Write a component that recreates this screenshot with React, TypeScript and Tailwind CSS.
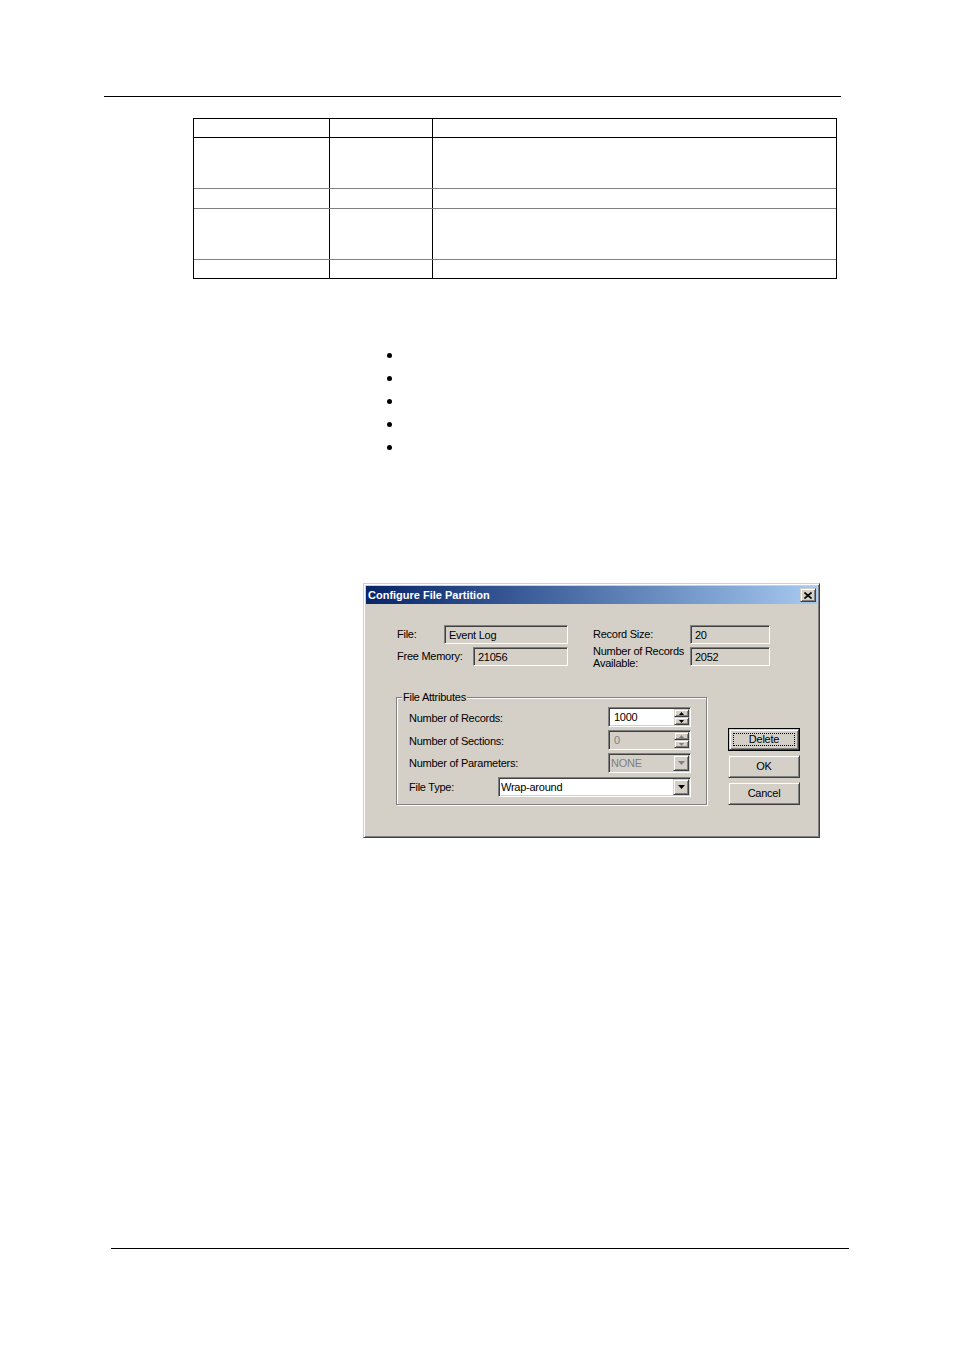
const sunken =
  "border border-t-[#808080] border-l-[#808080] border-r-white border-b-white shadow-[inset_1px_1px_0_#404040,inset_-1px_-1px_0_#d4d0c8]";
const raised =
  "border border-t-[#d4d0c8] border-l-[#d4d0c8] border-r-[#404040] border-b-[#404040] shadow-[inset_1px_1px_0_#fff,inset_-1px_-1px_0_#808080] bg-[#d4d0c8]";

const tableRows = [
  { h: "h-[19px]", line: "border-b border-b-black" },
  { h: "h-[51px]", line: "border-b border-b-[#808080]" },
  { h: "h-[20px]", line: "border-b border-b-[#808080]" },
  { h: "h-[51px]", line: "border-b border-b-[#808080]" },
  { h: "h-[18px]", line: "" },
];

function Arrow({ dir, color, w, h }: { dir: "up" | "down"; color: string; w: number; h: number }) {
  const pts = dir === "up" ? `0,${h} ${w},${h} ${w / 2},0` : `0,0 ${w},0 ${w / 2},${h}`;
  return (
    <svg width={w} height={h} viewBox={`0 0 ${w} ${h}`} className="block">
      <polygon points={pts} fill={color} />
    </svg>
  );
}

function ReadField({ className, value }: { className: string; value: string }) {
  return (
    <div className={`${className} h-[19px] ${sunken} bg-[#d4d0c8] flex items-center pl-[4px] pt-[1px]`}>
      {value}
    </div>
  );
}

function Spin({ value, disabled }: { value: string; disabled?: boolean }) {
  return (
    <div
      className={`w-[83px] h-[20px] ${sunken} flex p-[1px] ${disabled ? "bg-[#d4d0c8] text-[#808080]" : "bg-white"}`}
    >
      <div className="flex-1 flex items-center pl-[4px] pt-[1px]">{value}</div>
      <div className="w-[15px] flex flex-col">
        <div className={`h-[8px] ${raised} flex items-center justify-center`}>
          <Arrow dir="up" w={5} h={3} color={disabled ? "#808080" : "#000"} />
        </div>
        <div className={`h-[8px] ${raised} flex items-center justify-center`}>
          <Arrow dir="down" w={5} h={3} color={disabled ? "#808080" : "#000"} />
        </div>
      </div>
    </div>
  );
}

function Combo({ value, width, disabled }: { value: string; width: string; disabled?: boolean }) {
  return (
    <div
      className={`${width} h-[20px] ${sunken} flex p-[1px] ${disabled ? "bg-[#d4d0c8] text-[#808080]" : "bg-white"}`}
    >
      <div className="flex-1 flex items-center pl-[1px] pt-[1px]">{value}</div>
      <div className={`w-[16px] ${raised} flex items-center justify-center`}>
        <Arrow dir="down" w={7} h={4} color={disabled ? "#808080" : "#000"} />
      </div>
    </div>
  );
}

function Button({ label, isDefault }: { label: string; isDefault?: boolean }) {
  if (isDefault) {
    return (
      <div className="w-[72px] h-[23px] border border-black">
        <div className={`h-full ${raised} flex items-center justify-center p-[3px]`}>
          <div className="w-full h-full border border-dotted border-black flex items-center justify-center">
            {label}
          </div>
        </div>
      </div>
    );
  }
  return (
    <div className={`w-[72px] h-[23px] ${raised} flex items-center justify-center`}>{label}</div>
  );
}

function Dialog() {
  return (
    <div
      className={`ml-[363px] w-[457px] h-[255px] bg-[#d4d0c8] p-[2px] border border-t-[#d4d0c8] border-l-[#d4d0c8] border-r-[#404040] border-b-[#404040] shadow-[inset_1px_1px_0_#fff,inset_-1px_-1px_0_#808080] text-[11px] tracking-[-0.25px] text-black font-[family-name:Liberation_Sans,Arial,sans-serif]`}
    >
      <div className="h-[18px] flex items-center justify-between pl-[2px] pr-[1px] bg-linear-to-r from-[#0a246a] to-[#a6caf0]">
        <span className="text-white font-bold tracking-normal">Configure File Partition</span>
        <div className={`w-[16px] h-[14px] ${raised} flex items-center justify-center`}>
          <svg width="8" height="7" viewBox="0 0 8 7" className="block">
            <path d="M0.5 0.5 L7.5 6.5 M7.5 0.5 L0.5 6.5" stroke="#000" strokeWidth="1.6" />
          </svg>
        </div>
      </div>

      <div className="pt-[21px] pl-[30px]">
        <div className="ml-[1px] flex items-center h-[19px]">
          <div className="w-[47px]">File:</div>
          <ReadField className="w-[124px]" value="Event Log" />
          <div className="ml-[25px] w-[97px]">Record Size:</div>
          <ReadField className="w-[80px]" value="20" />
        </div>
        <div className="ml-[1px] mt-[3px] flex items-center h-[19px]">
          <div className="w-[76px]">Free Memory:</div>
          <ReadField className="w-[95px]" value="21056" />
          <div className="ml-[25px] w-[97px] leading-[12px]">
            Number of Records
            <br />
            Available:
          </div>
          <ReadField className="w-[80px]" value="2052" />
        </div>

        <div className="mt-[31px] flex items-start">
          <div className="w-[311px] h-[108px] border border-[#808080] shadow-[inset_1px_1px_0_#fff,1px_1px_0_#fff] pl-[12px] pr-[15px]">
            <div className="-mt-[7px] -ml-[7px] w-fit px-[1px] bg-[#d4d0c8] leading-[12px]">File Attributes</div>
            <div className="mt-[4px] flex items-center justify-between h-[20px]">
              <span className="pt-[3px]">Number of Records:</span>
              <Spin value="1000" />
            </div>
            <div className="mt-[3px] flex items-center justify-between h-[20px]">
              <span className="pt-[2px]">Number of Sections:</span>
              <Spin value="0" disabled />
            </div>
            <div className="mt-[3px] flex items-center justify-between h-[20px]">
              <span className="pt-[1px]">Number of Parameters:</span>
              <Combo value="NONE" width="w-[83px]" disabled />
            </div>
            <div className="mt-[4px] flex items-center justify-between h-[20px]">
              <span>File Type:</span>
              <Combo value="Wrap-around" width="w-[193px]" />
            </div>
          </div>

          <div className="ml-[21px] mt-[31px] flex flex-col gap-[4px]">
            <Button label="Delete" isDefault />
            <Button label="OK" />
            <Button label="Cancel" />
          </div>
        </div>
      </div>
    </div>
  );
}

export default function App() {
  return (
    <div className="w-[954px] min-h-[1351px] bg-white pt-[96px] font-[family-name:Liberation_Sans,Arial,sans-serif]">
      <div className="ml-[104px] w-[737px] h-px bg-black" />

      <div className="mt-[21px] ml-[193px] w-[644px] border border-black">
        {tableRows.map((r, i) => (
          <div key={i} className={`flex ${r.h} ${r.line}`}>
            <div className="w-[136px] border-r border-r-black" />
            <div className="w-[103px] border-r border-r-black" />
            <div className="flex-1" />
          </div>
        ))}
      </div>

      <ul className="mt-[65px]">
        {[0, 1, 2, 3, 4].map((i) => (
          <li key={i} className="h-[23px] flex items-center">
            <span className="ml-[387px] w-[5px] h-[5px] rounded-full bg-black" />
          </li>
        ))}
      </ul>

      <div className="mt-[124px]">
        <Dialog />
      </div>

      <div className="mt-[410px] ml-[111px] w-[738px] h-px bg-black" />
    </div>
  );
}
